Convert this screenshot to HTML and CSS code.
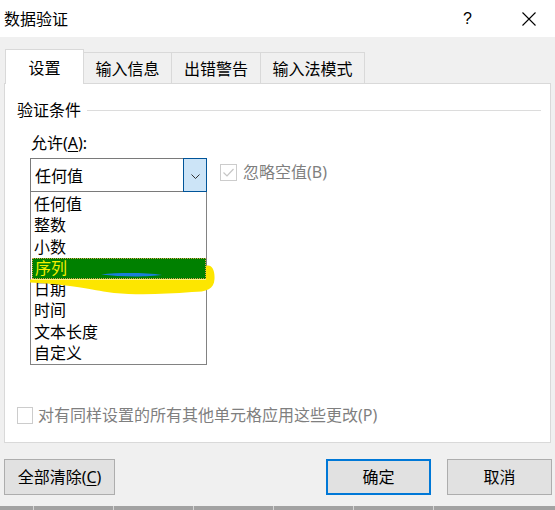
FILE: index.html
```html
<!DOCTYPE html>
<html lang="zh-CN">
<head>
<meta charset="utf-8">
<title>数据验证</title>
<link rel="stylesheet" href="styles.css">
</head>
<body>
<div class="dialog">
  <div class="titlebar">
    <span class="title">数据验证</span>
    <span class="help">?</span>
    <svg class="close" width="14" height="14" viewBox="0 0 14 14"><path d="M0.5 0.5 L13.5 13.5 M13.5 0.5 L0.5 13.5" stroke="#000" stroke-width="1.1" fill="none"/></svg>
  </div>
  <div class="content">
    <div class="tabs">
      <div class="tab active">设置</div>
      <div class="tab t2">输入信息</div>
      <div class="tab t3">出错警告</div>
      <div class="tab t4">输入法模式</div>
    </div>
    <div class="panel">
      <div class="group-head"><span>验证条件</span><span class="rule"></span></div>
      <div class="label">允许(<u>A</u>):</div>
      <div class="combo-row">
        <div class="combo-wrap">
          <div class="combo">
            <span class="combo-text">任何值</span>
            <span class="combo-btn"><svg width="9" height="5" viewBox="0 0 9 5"><path d="M0.5 0.5 L4.5 4.5 L8.5 0.5" stroke="#333" stroke-width="1" fill="none"/></svg></span>
          </div>
          <ul class="list">
            <li>任何值</li>
            <li>整数</li>
            <li>小数</li>
            <li class="sel">序列</li>
            <li>日期</li>
            <li>时间</li>
            <li>文本长度</li>
            <li>自定义</li>
          </ul>
        </div>
        <div class="check disabled top">
          <span class="box"><svg width="15" height="15" viewBox="0 0 15 15"><path d="M2.5 7.5 L6 11 L12.5 4" stroke="#c6c6c6" stroke-width="1.2" fill="none"/></svg></span>
          <span class="check-label">忽略空值(B)</span>
        </div>
      </div>
      <div class="check disabled bottom">
        <span class="box"></span>
        <span class="check-label">对有同样设置的所有其他单元格应用这些更改(P)</span>
      </div>
    </div>
    <div class="buttons">
      <div class="btn clear">全部清除(<u>C</u>)</div>
      <div class="btn ok">确定</div>
      <div class="btn cancel">取消</div>
    </div>
  </div>
  <div class="strip"></div>
  <svg class="marker" width="555" height="510" viewBox="0 0 555 510">
    <path class="hl" d="M30 279.5 L206 279.5 L206 266 C211 264 215 269 214.5 279 C214 289 207 292 192 292 C165 294 140 295.5 114 293 C95 291 80 285 30 282.5 Z" fill="#fde600"/>
    <path d="M101 274.5 C118 272.5 146 272.5 162 275 C148 277 120 277 101 274.5 Z" fill="#1a7fd9"/>
  </svg>
</div>
</body>
</html>
```
FILE: styles.css
```css
* { box-sizing: border-box; }
html, body { margin: 0; padding: 0; }
body {
  font-family: "Noto Sans", "Noto Sans CJK SC", sans-serif;
  font-size: 16px;
  color: #000;
  background: #f0f0f0;
}
.dialog {
  position: relative;
  width: 555px;
  height: 510px;
  display: flex;
  flex-direction: column;
  overflow: hidden;
  background: #f0f0f0;
}
.titlebar {
  height: 37px;
  background: #fff;
  display: flex;
  align-items: center;
  padding-left: 4px;
  flex: none;
}
.title { line-height: 20px; }
.help {
  margin-left: auto;
  font-family: "Liberation Sans", sans-serif;
  font-size: 16px;
  line-height: 20px;
  margin-right: 50px;
}
.close { margin-right: 19px; }
.content {
  flex: none;
  padding: 0 4px;
}
.tabs {
  margin-top: 12px;
  margin-left: 1px;
  height: 35px;
  margin-bottom: -1px;
  display: flex;
  align-items: flex-end;
}
.tab {
  height: 32px;
  background: #f0f0f0;
  border: 1px solid #d9d9d9;
  border-left: none;
  display: flex;
  align-items: center;
  justify-content: center;
  padding-top: 2px;
  line-height: 20px;
}
.tab.active {
  position: relative;
  height: 35px;
  width: 79px;
  background: #fff;
  border-left: 1px solid #d9d9d9;
  border-bottom: none;
  padding-top: 1px;
}
.t2 { width: 88px; }
.t3 { width: 89px; }
.t4 { width: 104px; }
.panel {
  height: 360px;
  background: #fff;
  border: 1px solid #d9d9d9;
  display: flex;
  flex-direction: column;
}
.group-head {
  margin-top: 16px;
  height: 20px;
  line-height: 20px;
  padding-left: 12px;
  display: flex;
  align-items: center;
}
.rule {
  flex: 1;
  height: 1px;
  background: #dcdcdc;
  margin-left: 6px;
  margin-right: 9px;
}
.label {
  margin-top: 13px;
  padding-left: 26px;
  line-height: 20px;
}
.label u, .btn u { text-underline-offset: 2px; }
.combo-row {
  margin-top: 5px;
  padding-left: 25px;
  display: flex;
  align-items: flex-start;
}
.combo-wrap {
  position: relative;
  width: 177px;
  height: 34px;
}
.combo {
  width: 177px;
  height: 34px;
  border: 1px solid #7a7a7a;
  display: flex;
  align-items: center;
  background: #fff;
}
.combo-text {
  flex: 1;
  padding-left: 4px;
  line-height: 20px;
  padding-top: 1px;
}
.combo-btn {
  width: 24px;
  height: 34px;
  margin: -1px -1px -1px 0;
  background: #cce4f7;
  border: 1px solid #005499;
  display: flex;
  align-items: center;
  justify-content: center;
  padding-top: 2px;
}
.list {
  position: absolute;
  left: 0;
  top: 34px;
  width: 177px;
  height: 173px;
  margin: 0;
  padding: 2px 0 0 0;
  list-style: none;
  background: #fff;
  border: 1px solid #828282;
  border-top: none;
  z-index: 2;
}
.list li {
  height: 21.3px;
  line-height: 21.3px;
  padding-left: 3px;
}
.list li.sel {
  background: #008000;
  color: #f4f000;
  margin: 0 0 0 1px;
  outline: 1px dotted #d9a050;
  outline-offset: -1px;
}
.check {
  display: flex;
  align-items: center;
}
.check .box {
  width: 17px;
  height: 17px;
  border: 1px solid #cccccc;
  background: #fff;
  display: flex;
  align-items: center;
  justify-content: center;
}
.check-label {
  color: #7f7f7f;
  line-height: 20px;
  margin-left: 6px;
}
.check.top {
  margin-left: 13px;
  margin-top: 4px;
}
.check.bottom {
  margin-top: auto;
  margin-bottom: 17px;
  padding-left: 12px;
}
.check.bottom .box {
  width: 16px;
  height: 17px;
}
.check.bottom .check-label { margin-left: 5px; }
.buttons {
  margin-top: 16px;
  height: 36px;
  display: flex;
}
.btn {
  height: 36px;
  background: #e1e1e1;
  border: 1px solid #adadad;
  display: flex;
  align-items: center;
  justify-content: center;
  line-height: 20px;
}
.clear { width: 111px; }
.ok {
  width: 105px;
  margin-left: auto;
  border: 2px solid #0078d7;
}
.cancel {
  width: 105px;
  margin-left: 16px;
  margin-right: -1px;
}
.strip {
  margin-top: auto;
  height: 4px;
  flex: none;
  background: repeating-linear-gradient(to right, #a2a2a2 0 79px, #d6d6d6 79px 80px);
  background-position: -46px 0;
}
.marker {
  position: absolute;
  left: 0;
  top: 0;
  pointer-events: none;
  z-index: 3;
}
.marker .hl { mix-blend-mode: multiply; }
```
